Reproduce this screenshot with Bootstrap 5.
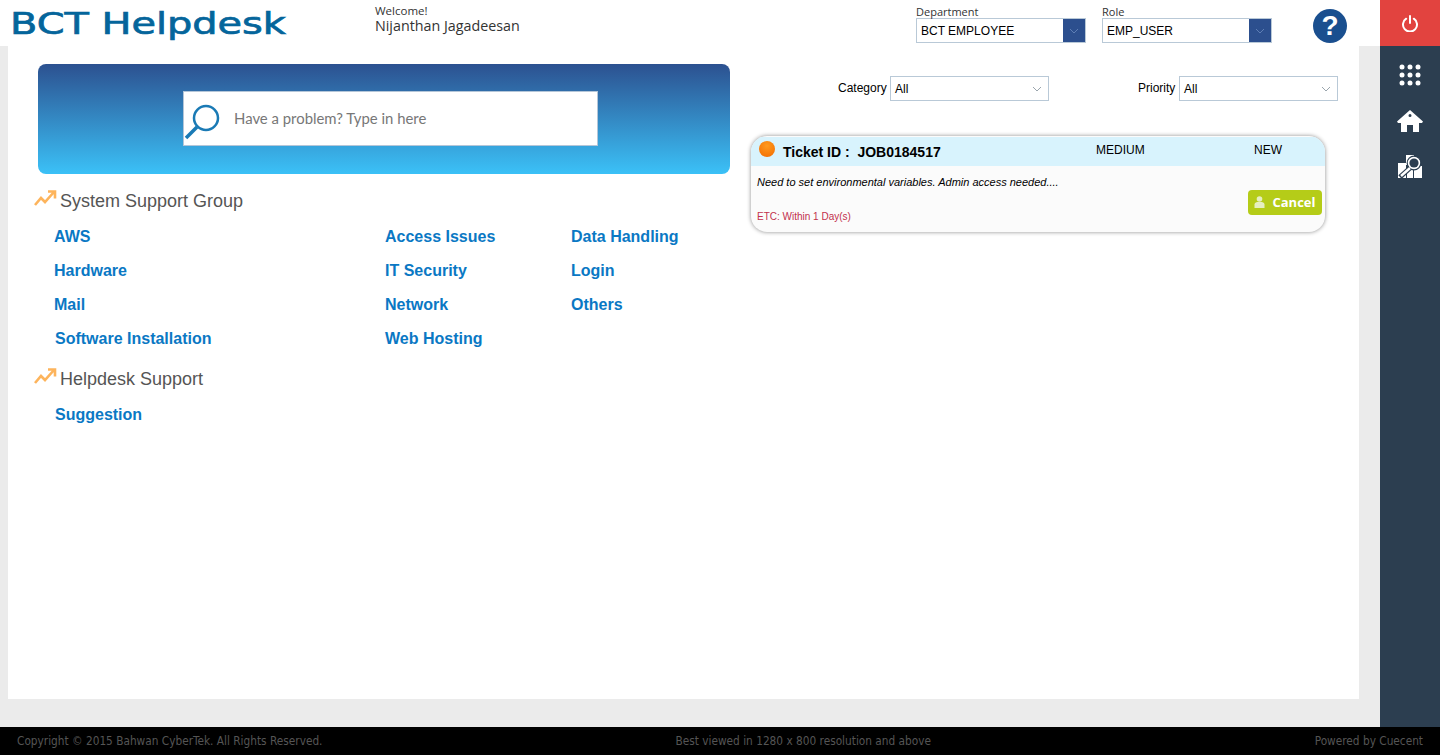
<!DOCTYPE html>
<html lang="en">
<head>
  <meta charset="UTF-8" />
  <title>BCT Helpdesk</title>
  <link href="https://cdn.jsdelivr.net/npm/bootstrap@5.3.0/dist/css/bootstrap.min.css" rel="stylesheet" />
  <style>
    html, body { height: 100%; }
    body { font-family: "Liberation Sans", Arial, sans-serif; background: #ebebeb; height: 755px; overflow: hidden; color: #000; }
    .top-bar { height: 46px; background: #fff; }
    .logo-box { width: 365px; margin-left: 10px; height: 46px; }
    .logo-text { display: inline-block; font-family: "DejaVu Sans", sans-serif; font-size: 31px; line-height: 47px; color: #04659b; transform: scaleX(1.285); transform-origin: left center; white-space: nowrap; -webkit-text-stroke: .7px #04659b; }
    .welcome-box { width: 541px; padding-top: 5px; font-family: "Open Sans", sans-serif; color: #333; }
    .welcome-small { font-size: 11.5px; line-height: 12px; }
    .welcome-name { font-size: 14.3px; line-height: 18px; }
    .role-box { padding-top: 5px; font-size: 11px; line-height: 13px; font-family: "Open Sans", sans-serif; color: #333; }
    .dept-box { width: 186px; }
    .rolesel-box { width: 211px; }
    .drop-box { height: 25px; border: 1px solid #b9c9d7; background: #fff; font-family: "Liberation Sans", Arial, sans-serif; font-size: 12px; color: #000; }
    .drop-text { padding-left: 4px; line-height: 24px; }
    .drop-arrow { width: 22px; background: #2c4f8e; }
    .dept-drop { width: 170px; }
    .help-circle { width: 34px; height: 34px; margin-top: 9px; background: #1a4f8f; color: #fff; font-size: 28px; font-weight: 700; line-height: 34px; border-radius: 50%; text-align: center; }
    .help-spacer { width: 33px; }
    .power-btn { width: 60px; height: 46px; background: #e2433f; }
    .main-wrap { height: 681px; }
    .page-zone { padding: 0 21px 28px 8px; }
    .white-panel { background: #fff; height: 653px; padding: 18px 0 0 30px; }
    .left-zone { width: 692px; }
    .hero-box { height: 110px; border-radius: 8px; background: linear-gradient(#2c5190, #3bc1f7); padding: 27px 0 0 145px; }
    .search-box { width: 415px; height: 55px; background: #fff; border: 1px solid #b4c6d8; }
    .search-hint { font-family: "Lato", sans-serif; font-size: 14.9px; color: #777; margin-left: 14px; }
    .group-head { margin: 14px 0 0 -4px; height: 26px; font-size: 18px; line-height: 26px; color: #555; }
    .group-head svg { margin-right: 3px; margin-top: -6px; }
    .topic-grid { display: grid; grid-template-columns: 331px 186px 160px; grid-auto-rows: 34px; margin: 6px 0 0 16px; }
    .topic-link { font-size: 16px; font-weight: 700; line-height: 34px; color: #0a78c4; text-decoration: none; }
    .nudge { padding-left: 1px; }
    .head-two { margin-top: 10px; }
    .grid-two { margin-top: 6px; }
    .right-zone { margin-left: 20px; width: 590px; }
    .filter-row { height: 25px; margin-top: 12px; font-size: 12px; }
    .cat-label { margin-left: 88px; width: 52px; line-height: 25px; }
    .pri-label { margin-left: 89px; width: 41px; line-height: 25px; }
    .filter-drop { width: 159px; }
    .filter-arrow { width: 22px; }
    .ticket-box { width: 574px; height: 96px; margin-top: 35px; margin-left: 1px; border-radius: 16px; background: #fbfbfb; box-shadow: 0 0 4px rgba(0,0,0,.45); overflow: hidden; }
    .ticket-head { height: 29px; margin-top: 1px; background: #d8f3fd; font-size: 12px; }
    .ticket-dot { width: 16px; height: 16px; border-radius: 50%; background: radial-gradient(circle at 50% 30%, #ff9a1e, #f26a00); margin: 4px 0 0 8px; }
    .ticket-id { width: 313px; margin-left: 8px; font-size: 14px; font-weight: 700; line-height: 30px; white-space: pre; }
    .ticket-pri { width: 158px; line-height: 27px; }
    .ticket-stat { line-height: 27px; }
    .ticket-body { padding: 10px 3px 0 6px; }
    .ticket-desc { font-size: 11px; font-style: italic; line-height: 13px; }
    .ticket-etc { font-size: 10px; line-height: 12px; color: #c2304c; margin-top: 22px; }
    .cancel-btn { width: 74px; height: 25px; margin-top: 14px; padding: 0; border: 0; border-radius: 4px; background: #b5cc18; color: #fff; font-family: "Open Sans", sans-serif; font-size: 13px; font-weight: 700; }
    .cancel-btn svg { margin-right: 7px; margin-top: -2px; }
    .side-rail { width: 60px; background: #2c3e50; padding-top: 18px; }
    .rail-icon { height: 45.5px; }
    .foot-bar { height: 28px; background: #000; color: #555; font-family: "DejaVu Sans Condensed", "DejaVu Sans", sans-serif; font-size: 11.75px; line-height: 29px; padding: 0 17px; }
    .foot-mid { margin-left: 353px; }
  </style>
</head>
<body>

  <!-- header -->
  <div class="top-bar d-flex">
    <div class="logo-box"><span class="logo-text">BCT Helpdesk</span></div>
    <div class="welcome-box">
      <div class="welcome-small">Welcome!</div>
      <div class="welcome-name">Nijanthan Jagadeesan</div>
    </div>
    <div class="role-box dept-box">
      <div>Department</div>
      <div class="drop-box dept-drop d-flex justify-content-between">
        <span class="drop-text">BCT EMPLOYEE</span>
        <span class="drop-arrow d-flex align-items-center justify-content-center"><svg width="10" height="6" viewBox="0 0 10 6"><path d="M1 1l4 4 4-4" fill="none" stroke="#5f7fb5" stroke-width="1"/></svg></span>
      </div>
    </div>
    <div class="role-box rolesel-box">
      <div>Role</div>
      <div class="drop-box dept-drop d-flex justify-content-between">
        <span class="drop-text">EMP_USER</span>
        <span class="drop-arrow d-flex align-items-center justify-content-center"><svg width="10" height="6" viewBox="0 0 10 6"><path d="M1 1l4 4 4-4" fill="none" stroke="#5f7fb5" stroke-width="1"/></svg></span>
      </div>
    </div>
    <div class="help-circle">?</div>
    <div class="help-spacer"></div>
    <div class="power-btn d-flex align-items-center justify-content-center">
      <svg width="18" height="18" viewBox="0 0 18 18"><path d="M5.2 4.2a7 7 0 1 0 7.6 0M9 1.5v7" fill="none" stroke="#fff" stroke-width="2" stroke-linecap="round" transform="translate(0 .5)"/></svg>
    </div>
  </div>

  <div class="main-wrap d-flex">
    <div class="page-zone flex-fill">
      <div class="white-panel d-flex">
        <div class="left-zone">
          <div class="hero-box">
            <div class="search-box d-flex align-items-center">
              <svg width="36" height="46" viewBox="0 0 36 46"><circle cx="22" cy="22" r="12" fill="none" stroke="#1a7ab5" stroke-width="2.5"/><path d="M13 31L2 42" stroke="#1a7ab5" stroke-width="3.5"/></svg>
              <span class="search-hint">Have a problem? Type in here</span>
            </div>
          </div>

          <div class="group-head d-flex align-items-center">
            <svg width="23" height="16" viewBox="0 0 23 16"><path d="M1 15l6-7 4 4 9-10M14 1.5h7v7" fill="none" stroke="#fdb45c" stroke-width="2.6"/></svg>
            <span>System Support Group</span>
          </div>
          <div class="topic-grid">
            <a class="topic-link" href="#">AWS</a><a class="topic-link" href="#">Access Issues</a><a class="topic-link" href="#">Data Handling</a>
            <a class="topic-link" href="#">Hardware</a><a class="topic-link" href="#">IT Security</a><a class="topic-link" href="#">Login</a>
            <a class="topic-link" href="#">Mail</a><a class="topic-link" href="#">Network</a><a class="topic-link" href="#">Others</a>
            <a class="topic-link nudge" href="#">Software Installation</a><a class="topic-link" href="#">Web Hosting</a>
          </div>

          <div class="group-head head-two d-flex align-items-center">
            <svg width="23" height="16" viewBox="0 0 23 16"><path d="M1 15l6-7 4 4 9-10M14 1.5h7v7" fill="none" stroke="#fdb45c" stroke-width="2.6"/></svg>
            <span>Helpdesk Support</span>
          </div>
          <div class="topic-grid grid-two">
            <a class="topic-link nudge" href="#">Suggestion</a>
          </div>
        </div>

        <div class="right-zone">
          <div class="filter-row d-flex">
            <span class="cat-label">Category</span>
            <div class="drop-box filter-drop d-flex justify-content-between">
              <span class="drop-text">All</span>
              <span class="filter-arrow d-flex align-items-center justify-content-center"><svg width="10" height="6" viewBox="0 0 10 6"><path d="M1 1l4 4 4-4" fill="none" stroke="#9aa5ad" stroke-width="1"/></svg></span>
            </div>
            <span class="pri-label">Priority</span>
            <div class="drop-box filter-drop d-flex justify-content-between">
              <span class="drop-text">All</span>
              <span class="filter-arrow d-flex align-items-center justify-content-center"><svg width="10" height="6" viewBox="0 0 10 6"><path d="M1 1l4 4 4-4" fill="none" stroke="#9aa5ad" stroke-width="1"/></svg></span>
            </div>
          </div>

          <div class="ticket-box">
            <div class="ticket-head d-flex">
              <div class="ticket-dot"></div>
              <div class="ticket-id">Ticket ID :  JOB0184517</div>
              <div class="ticket-pri">MEDIUM</div>
              <div class="ticket-stat">NEW</div>
            </div>
            <div class="ticket-body d-flex justify-content-between">
              <div>
                <div class="ticket-desc">Need to set environmental variables. Admin access needed....</div>
                <div class="ticket-etc">ETC: Within 1 Day(s)</div>
              </div>
              <button class="btn cancel-btn" type="button"><svg width="11" height="12" viewBox="0 0 11 12"><circle cx="5.5" cy="3" r="2.8" fill="#e6efc0"/><path d="M.5 12V8.5C.5 7 2 6 3.5 6h4C9 6 10.5 7 10.5 8.5V12z" fill="#e6efc0"/></svg>Cancel</button>
            </div>
          </div>
        </div>
      </div>
    </div>

    <!-- right rail -->
    <div class="side-rail">
      <div class="rail-icon d-flex justify-content-center">
        <svg width="22" height="22" viewBox="0 0 22 22" fill="#fff"><circle cx="3" cy="3" r="2.5"/><circle cx="11" cy="3" r="2.5"/><circle cx="19" cy="3" r="2.5"/><circle cx="3" cy="11" r="2.5"/><circle cx="11" cy="11" r="2.5"/><circle cx="19" cy="11" r="2.5"/><circle cx="3" cy="19" r="2.5"/><circle cx="11" cy="19" r="2.5"/><circle cx="19" cy="19" r="2.5"/></svg>
      </div>
      <div class="rail-icon d-flex justify-content-center">
        <svg width="26" height="22" viewBox="0 0 26 22"><path fill="#fff" fill-rule="evenodd" d="M13 0l13 11.5-1 1.5H22v9h-6v-7h-6v7H4v-9H1L0 11.5zM13 4a1.5 1.5 0 1 0 0 3 1.5 1.5 0 0 0 0-3z"/></svg>
      </div>
      <div class="rail-icon d-flex justify-content-center">
        <svg width="24" height="23" viewBox="0 0 24 23"><path fill="#fff" d="M0 8h8v15H0zM8 0h8v10H8zM9 15h6v8H9zM16 11h8v12h-8z"/><circle cx="16" cy="8" r="6.8" fill="#fff" stroke="#2c3e50" stroke-width="1.2"/><circle cx="16" cy="8" r="4.6" fill="#2c3e50"/><path d="M12 13L2 22" stroke="#2c3e50" stroke-width="5"/><path d="M12 13L3 21" stroke="#fff" stroke-width="2.4"/></svg>
      </div>
    </div>
  </div>

  <div class="foot-bar d-flex">
    <span>Copyright © 2015 Bahwan CyberTek. All Rights Reserved.</span>
    <span class="foot-mid">Best viewed in 1280 x 800 resolution and above</span>
    <span class="ms-auto">Powered by Cuecent</span>
  </div>

</body>
</html>
